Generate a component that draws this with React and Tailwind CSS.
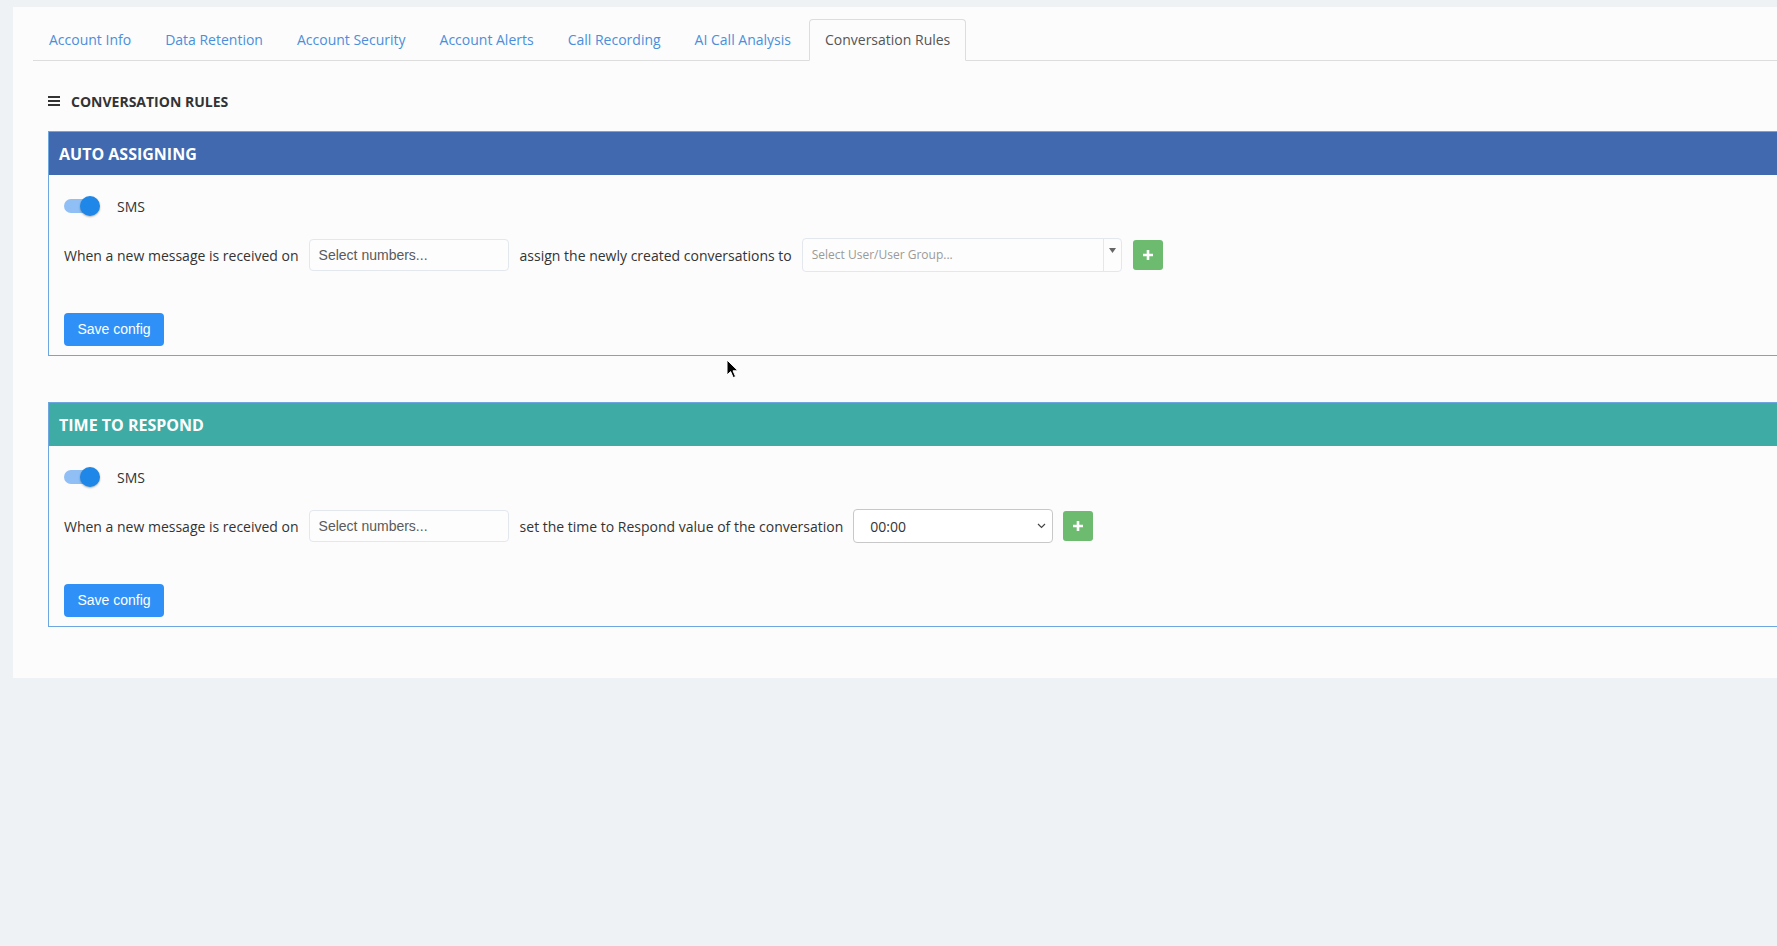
import React from 'react'

const TABS = [
  'Account Info',
  'Data Retention',
  'Account Security',
  'Account Alerts',
  'Call Recording',
  'AI Call Analysis',
  'Conversation Rules',
]

function Toggle() {
  return (
    <div className="relative w-[36px] h-[20px] flex items-center">
      <div className="w-[34px] h-[14px] rounded-full bg-[#8fbff4]" />
      <div className="absolute right-0 top-0 w-[20px] h-[20px] rounded-full bg-[#1f87e8] shadow-[0_1px_2px_rgba(0,0,0,0.3)]" />
    </div>
  )
}

function PlusButton() {
  return (
    <button className="w-[30px] h-[30px] rounded-[3px] bg-[#6cbb6f] flex items-center justify-center">
      <svg width="12" height="12" viewBox="0 0 12 12">
        <path d="M6 1v10M1 6h10" stroke="#fff" strokeWidth="2.6" />
      </svg>
    </button>
  )
}

function NumbersInput() {
  return (
    <div className="w-[200px] h-[32px] border border-[#e3e8ee] rounded-[4px] bg-[#fdfdfd] flex items-center pl-[9px] font-['Liberation_Sans',Arial,sans-serif] text-[14px] text-[#5a5a5a]">
      Select numbers...
    </div>
  )
}

function SaveButton() {
  return (
    <button className="w-[100px] h-[33px] rounded-[4px] bg-[#2f90f7] text-white text-[14px] font-['Liberation_Sans',Arial,sans-serif]">
      Save config
    </button>
  )
}

function Panel({ title, headerClass, children }) {
  return (
    <div className="border border-[#6ea6e0] bg-[#fcfcfd]">
      <div className={`h-[43px] flex items-center pl-[10px] text-white text-[16px] font-bold ${headerClass}`}>
        {title}
      </div>
      <div className="px-[15px] pt-[21px] pb-[9px]">
        <div className="flex items-center h-[20px]">
          <Toggle />
          <span className="ml-[17px] text-[14px] text-[#333]">SMS</span>
        </div>
        <div className="mt-[22px] h-[34px] flex items-center text-[14px] text-[#333]">{children}</div>
        <div className="mt-[41px]">
          <SaveButton />
        </div>
      </div>
    </div>
  )
}

export default function App() {
  return (
    <div className="h-[946px] w-full overflow-hidden bg-[#eef2f5] pt-[7px] pl-[13px] font-['Open_Sans',sans-serif] relative">
      <div className="w-[1800px] h-[671px] bg-[#fcfcfc] pt-[12px] pl-[20px]">
        {/* tabs */}
        <ul className="flex border-b border-[#dddddd]">
          {TABS.map((t) => {
            const active = t === 'Conversation Rules'
            return (
              <li key={t} className="mr-[2px] -mb-px">
                <a
                  className={
                    active
                      ? 'block px-[15px] py-[10px] leading-[20px] text-[14px] text-[#555] bg-[#fcfcfc] border border-[#dddddd] border-b-transparent rounded-t-[4px]'
                      : 'block px-[15px] py-[10px] leading-[20px] text-[14px] text-[#4a8fdb] border border-transparent'
                  }
                >
                  {t}
                </a>
              </li>
            )
          })}
        </ul>

        <div className="pl-[15px]">
          <div className="mt-[30px] h-[20px] flex items-center">
            <svg width="12" height="10" viewBox="0 0 12 10" className="text-[#333]">
              <rect x="0" y="0" width="12" height="2" fill="currentColor" />
              <rect x="0" y="4" width="12" height="2" fill="currentColor" />
              <rect x="0" y="8" width="12" height="2" fill="currentColor" />
            </svg>
            <span className="ml-[11px] text-[14px] font-bold text-[#333]">CONVERSATION RULES</span>
          </div>

          <div className="mt-[20px]">
            <Panel title="AUTO ASSIGNING" headerClass="bg-[#4069b0]">
              <span>When a new message is received on</span>
              <div className="ml-[10px]">
                <NumbersInput />
              </div>
              <span className="ml-[11px]">assign the newly created conversations to</span>
              <div className="ml-[10px] w-[320px] h-[34px] border border-[#e3e8ee] rounded-[4px] bg-[#fdfdfd] flex">
                <div className="flex-1 flex items-center pl-[9px] text-[12px] text-[#9a9a9a]">
                  Select User/User Group...
                </div>
                <div className="w-[18px] border-l border-[#e3e8ee] flex justify-center pt-[9px]">
                  <svg width="7" height="5" viewBox="0 0 7 5">
                    <path d="M0 0h7L3.5 5z" fill="#666" />
                  </svg>
                </div>
              </div>
              <div className="ml-[11px]">
                <PlusButton />
              </div>
            </Panel>
          </div>

          <div className="mt-[46px]">
            <Panel title="TIME TO RESPOND" headerClass="bg-[#3eaba5]">
              <span>When a new message is received on</span>
              <div className="ml-[10px]">
                <NumbersInput />
              </div>
              <span className="ml-[11px]">set the time to Respond value of the conversation</span>
              <div className="ml-[10px] w-[200px] h-[34px] border border-[#c8c8c8] rounded-[4px] bg-white flex items-center justify-between pl-[16px] pr-[6px] text-[14px] text-[#333]">
                <span>00:00</span>
                <svg width="9" height="6" viewBox="0 0 9 6">
                  <path d="M1 1l3.5 3.5L8 1" stroke="#444" strokeWidth="1.2" fill="none" />
                </svg>
              </div>
              <div className="ml-[10px]">
                <PlusButton />
              </div>
            </Panel>
          </div>
        </div>
      </div>

      {/* mouse pointer */}
      <svg
        width="14"
        height="21"
        viewBox="0 0 14 21"
        className="absolute left-[726px] top-[359px]"
      >
        <path
          d="M1 1v15l3.6-3.4 2.6 6 2.4-1-2.6-5.8H12z"
          fill="#000"
          stroke="#fff"
          strokeWidth="1"
          strokeLinejoin="round"
        />
      </svg>
    </div>
  )
}
